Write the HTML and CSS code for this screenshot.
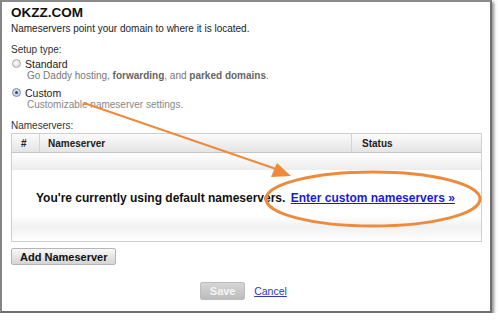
FILE: index.html
```html
<!DOCTYPE html>
<html>
<head>
<meta charset="utf-8">
<link rel="stylesheet" href="styles.css">
</head>
<body>
<div class="frame">
  <h1 class="title">OKZZ.COM</h1>
  <p class="intro">Nameservers point your domain to where it is located.</p>
  <div class="label">Setup type:</div>
  <div class="option first">
    <span class="radio"></span><span class="opt-name">Standard</span>
  </div>
  <div class="opt-desc dark">Go Daddy hosting, <b>forwarding</b>, and <b>parked domains</b>.</div>
  <div class="option">
    <span class="radio checked"></span><span class="opt-name">Custom</span>
  </div>
  <div class="opt-desc">Customizable nameserver settings.</div>
  <div class="label ns-label">Nameservers:</div>
  <div class="table">
    <div class="thead">
      <div class="th c-num">#</div>
      <div class="th c-ns">Nameserver</div>
      <div class="th c-st">Status</div>
    </div>
    <div class="empty-row"></div>
    <div class="tbody">
      <span class="msg">You're currently using default nameservers.</span>
      <a class="enter" href="#">Enter custom nameservers »</a>
    </div>
  </div>
  <div class="add-row"><button class="btn">Add Nameserver</button></div>
  <div class="actions">
    <button class="btn save" disabled>Save</button>
    <a class="cancel" href="#">Cancel</a>
  </div>
  <svg class="annot" width="500" height="321" viewBox="0 0 500 321">
    <line x1="84" y1="103" x2="279" y2="170" stroke="#ee8a3c" stroke-width="2"/>
    <polygon points="291,176 271,177 277,163" fill="#ee8a3c"/>
    <ellipse cx="373" cy="199" rx="107" ry="27" fill="none" stroke="#ee8a3c" stroke-width="3"/>
  </svg>
</div>
</body>
</html>
```

FILE: styles.css
```css
html, body { margin: 0; padding: 0; background: #fff; }
body { font-family: "Liberation Sans", Arial, sans-serif; font-size: 10px; color: #222; }
.frame {
  position: relative;
  width: 479px;
  height: 306px;
  padding: 3px 0 0 9px;
  border-left: 2px solid #858585;
  border-top: 2px solid #8a8a8a;
  border-right: 2px solid #6f6f6f;
  border-bottom: 2px solid #6f6f6f;
  box-shadow: 2px 2px 3px rgba(0,0,0,0.45);
  background: #fff;
  box-sizing: content-box;
}
.title { margin: 0; font-size: 13.5px; font-weight: bold; color: #111; line-height: 16px; }
.intro { margin: 2px 0 0; line-height: 12px; color: #222; }
.label { margin-top: 9px; line-height: 12px; color: #333; }
.option { display: flex; align-items: center; height: 13px; margin-top: 4px; }
.option.first { margin-top: 1px; }
.radio {
  width: 9px; height: 9px; border-radius: 50%;
  border: 1px solid #aaa;
  background: radial-gradient(circle at 40% 40%, #fff, #ccc);
  margin-right: 4px; margin-left: 1px;
  box-sizing: border-box; position: relative;
}
.radio.checked { border-color: #7a8da8; background: radial-gradient(circle at 45% 45%, #e8eef6, #b6c3d6); }
.radio.checked::after {
  content: ""; position: absolute; left: 2px; top: 2px; width: 3px; height: 3px; border-radius: 50%; background: #2b4a78;
}
.opt-name { font-size: 10.5px; color: #222; }
.opt-desc { margin-left: 16px; color: #888; line-height: 12px; }
.opt-desc.dark { color: #777; }
.opt-desc b { color: #666; }
.ns-label { margin-top: 9px; }
.table {
  width: 469px;
  border: 1px solid #cfcfcf;
  margin-top: 1px;
}
.thead {
  display: flex; height: 18px;
  background: linear-gradient(#fbfbfb, #e4e4e4);
  border-bottom: 1px solid #c4c4c4;
  font-weight: bold; color: #222;
}
.th { display: flex; align-items: center; box-sizing: border-box; border-right: 1px solid #d4d4d4; }
.c-num { width: 28px; padding-left: 9px; }
.c-ns { width: 312px; padding-left: 8px; }
.c-st { flex: 1; border-right: 0; padding-left: 10px; }
.empty-row { height: 17px; background: linear-gradient(#fff, #ececec); }
.tbody {
  height: 71px;
  box-sizing: border-box;
  padding: 21px 0 0 24px;
  line-height: 14px;
  font-size: 12px; font-weight: bold;
  background: linear-gradient(#fff 65%, #f1f1f1 80%, #fff);
}
.msg { color: #111; }
.enter { color: #1a1ad8; margin-left: 2px; text-decoration: underline; }
.add-row { margin-top: 6px; }
.btn {
  font-family: "Liberation Sans", Arial, sans-serif;
  font-size: 11px; font-weight: bold; color: #111;
  height: 17px; padding: 0 8px;
  border: 1px solid #b5b5b5; border-radius: 2px;
  background: linear-gradient(#f8f8f8, #d4d4d4);
  box-sizing: border-box;
}
.actions { display: flex; align-items: center; justify-content: center; margin-top: 17px; gap: 9px; padding-right: 14px; }
.save { color: #f4f4f4; background: linear-gradient(#d6d6d6, #bcbcbc); border-color: #bdbdbd; width: 45px; height: 18px; }
.cancel { color: #2a3bb8; text-decoration: underline; font-size: 10.5px; }
.annot { position: absolute; left: -2px; top: -2px; pointer-events: none; }
```
